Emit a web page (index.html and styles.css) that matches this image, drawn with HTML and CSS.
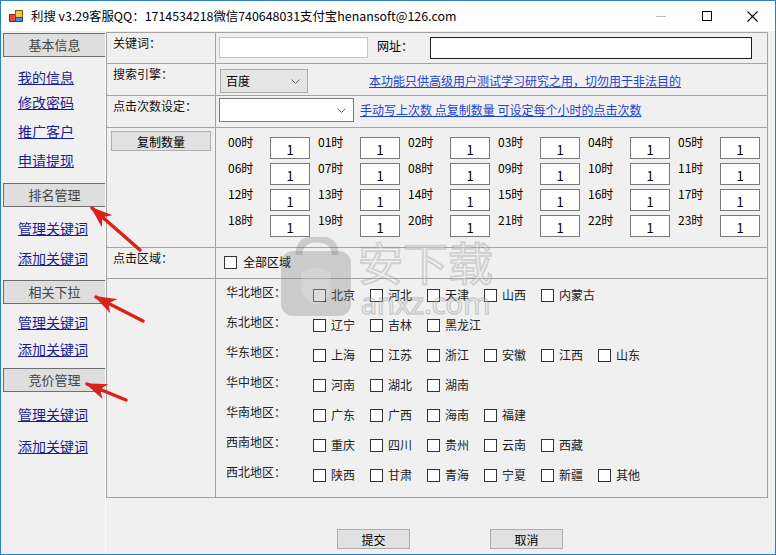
FILE: index.html
```html
<!DOCTYPE html>
<html lang="zh-CN">
<head>
  <meta charset="UTF-8">
  <title>利搜</title>
  <link rel="stylesheet" href="styles.css">
</head>
<body>

<div class="window">
  <div class="titlebar">
    <svg class="app-icon" width="14" height="13" viewBox="0 0 14 13">
      <rect x="0.5" y="4.5" width="6" height="7" fill="#e8453c" stroke="#8a2a20"/>
      <rect x="6.5" y="0.5" width="7" height="7" fill="#f5c542" stroke="#7a5a10"/>
      <rect x="6.5" y="7.5" width="7" height="4" fill="#4a8fd8" stroke="#1f4f8a"/>
    </svg>
    <span class="title">利搜 v3.29客服QQ：1714534218微信740648031支付宝henansoft@126.com</span>
    <div class="win-controls">
      <span class="ctl"><svg width="10" height="10" viewBox="0 0 10 10"><line x1="0" y1="5.5" x2="10" y2="5.5" stroke="#bdbdbd"/></svg></span>
      <span class="ctl"><svg width="10" height="10" viewBox="0 0 10 10"><rect x="0.5" y="0.5" width="9" height="9" fill="none" stroke="#000"/></svg></span>
      <span class="ctl close"><svg width="11" height="11" viewBox="0 0 11 11"><path d="M0.5 0.5 L10.5 10.5 M10.5 0.5 L0.5 10.5" stroke="#000" stroke-width="1.1"/></svg></span>
    </div>
  </div>

  <div class="client">
    <aside class="sidebar">
      <div class="nav-head">基本信息</div>
      <a class="nav-link mt10" href="#">我的信息</a>
      <a class="nav-link mt5" href="#">修改密码</a>
      <a class="nav-link" href="#">推广客户</a>
      <a class="nav-link" href="#">申请提现</a>

      <div class="nav-head mt13">排名管理</div>
      <a class="nav-link mt11" href="#">管理关键词</a>
      <a class="nav-link mt10" href="#">添加关键词</a>

      <div class="nav-head mt12">相关下拉</div>
      <a class="nav-link mt8" href="#">管理关键词</a>
      <a class="nav-link mt7" href="#">添加关键词</a>

      <div class="nav-head">竞价管理</div>
      <a class="nav-link mt12" href="#">管理关键词</a>
      <a class="nav-link mt12" href="#">添加关键词</a>
    </aside>

    <main class="main">
      <div class="form">
        <div class="cell label">关键词：</div>
        <div class="cell field f-keyword">
          <input class="text kw" type="text">
          <span class="url-label">网址：</span>
          <input class="text url" type="text">
        </div>

        <div class="cell label">搜索引擎：</div>
        <div class="cell field f-engine">
          <div class="combo gray">
            <span>百度</span>
            <svg width="9" height="5" viewBox="0 0 9 5"><polyline points="0.5,0.5 4.5,4.5 8.5,0.5" fill="none" stroke="#666"/></svg>
          </div>
          <a class="hint engine-hint" href="#">本功能只供高级用户测试学习研究之用，切勿用于非法目的</a>
        </div>

        <div class="cell label">点击次数设定：</div>
        <div class="cell field f-count">
          <div class="combo white">
            <span></span>
            <svg width="9" height="5" viewBox="0 0 9 5"><polyline points="0.5,0.5 4.5,4.5 8.5,0.5" fill="none" stroke="#666"/></svg>
          </div>
          <a class="hint count-hint" href="#">手动写上次数 点复制数量 可设定每个小时的点击次数</a>
        </div>

        <div class="cell label-btn">
          <button class="btn copy">复制数量</button>
        </div>
        <div class="cell f-hours">
          <div class="hours">
            <div class="hour"><span class="hour-label">00时</span><input class="hour-box" value="1"></div>
            <div class="hour"><span class="hour-label">01时</span><input class="hour-box" value="1"></div>
            <div class="hour"><span class="hour-label">02时</span><input class="hour-box" value="1"></div>
            <div class="hour"><span class="hour-label">03时</span><input class="hour-box" value="1"></div>
            <div class="hour"><span class="hour-label">04时</span><input class="hour-box" value="1"></div>
            <div class="hour"><span class="hour-label">05时</span><input class="hour-box" value="1"></div>
            <div class="hour"><span class="hour-label">06时</span><input class="hour-box" value="1"></div>
            <div class="hour"><span class="hour-label">07时</span><input class="hour-box" value="1"></div>
            <div class="hour"><span class="hour-label">08时</span><input class="hour-box" value="1"></div>
            <div class="hour"><span class="hour-label">09时</span><input class="hour-box" value="1"></div>
            <div class="hour"><span class="hour-label">10时</span><input class="hour-box" value="1"></div>
            <div class="hour"><span class="hour-label">11时</span><input class="hour-box" value="1"></div>
            <div class="hour"><span class="hour-label">12时</span><input class="hour-box" value="1"></div>
            <div class="hour"><span class="hour-label">13时</span><input class="hour-box" value="1"></div>
            <div class="hour"><span class="hour-label">14时</span><input class="hour-box" value="1"></div>
            <div class="hour"><span class="hour-label">15时</span><input class="hour-box" value="1"></div>
            <div class="hour"><span class="hour-label">16时</span><input class="hour-box" value="1"></div>
            <div class="hour"><span class="hour-label">17时</span><input class="hour-box" value="1"></div>
            <div class="hour"><span class="hour-label">18时</span><input class="hour-box" value="1"></div>
            <div class="hour"><span class="hour-label">19时</span><input class="hour-box" value="1"></div>
            <div class="hour"><span class="hour-label">20时</span><input class="hour-box" value="1"></div>
            <div class="hour"><span class="hour-label">21时</span><input class="hour-box" value="1"></div>
            <div class="hour"><span class="hour-label">22时</span><input class="hour-box" value="1"></div>
            <div class="hour"><span class="hour-label">23时</span><input class="hour-box" value="1"></div>
          </div>
        </div>

        <div class="cell label">点击区域：</div>
        <div class="cell field f-all">
          <input class="check" type="checkbox">
          <span class="all-text">全部区域</span>
        </div>

        <div class="cell"></div>
        <div class="cell f-regions">
          <div class="region">
            <span class="region-name">华北地区：</span>
            <label class="opt"><input class="check" type="checkbox">北京</label>
            <label class="opt"><input class="check" type="checkbox">河北</label>
            <label class="opt"><input class="check" type="checkbox">天津</label>
            <label class="opt"><input class="check" type="checkbox">山西</label>
            <label class="opt"><input class="check" type="checkbox">内蒙古</label>
          </div>
          <div class="region">
            <span class="region-name">东北地区：</span>
            <label class="opt"><input class="check" type="checkbox">辽宁</label>
            <label class="opt"><input class="check" type="checkbox">吉林</label>
            <label class="opt"><input class="check" type="checkbox">黑龙江</label>
          </div>
          <div class="region">
            <span class="region-name">华东地区：</span>
            <label class="opt"><input class="check" type="checkbox">上海</label>
            <label class="opt"><input class="check" type="checkbox">江苏</label>
            <label class="opt"><input class="check" type="checkbox">浙江</label>
            <label class="opt"><input class="check" type="checkbox">安徽</label>
            <label class="opt"><input class="check" type="checkbox">江西</label>
            <label class="opt"><input class="check" type="checkbox">山东</label>
          </div>
          <div class="region">
            <span class="region-name">华中地区：</span>
            <label class="opt"><input class="check" type="checkbox">河南</label>
            <label class="opt"><input class="check" type="checkbox">湖北</label>
            <label class="opt"><input class="check" type="checkbox">湖南</label>
          </div>
          <div class="region">
            <span class="region-name">华南地区：</span>
            <label class="opt"><input class="check" type="checkbox">广东</label>
            <label class="opt"><input class="check" type="checkbox">广西</label>
            <label class="opt"><input class="check" type="checkbox">海南</label>
            <label class="opt"><input class="check" type="checkbox">福建</label>
          </div>
          <div class="region">
            <span class="region-name">西南地区：</span>
            <label class="opt"><input class="check" type="checkbox">重庆</label>
            <label class="opt"><input class="check" type="checkbox">四川</label>
            <label class="opt"><input class="check" type="checkbox">贵州</label>
            <label class="opt"><input class="check" type="checkbox">云南</label>
            <label class="opt"><input class="check" type="checkbox">西藏</label>
          </div>
          <div class="region">
            <span class="region-name">西北地区：</span>
            <label class="opt"><input class="check" type="checkbox">陕西</label>
            <label class="opt"><input class="check" type="checkbox">甘肃</label>
            <label class="opt"><input class="check" type="checkbox">青海</label>
            <label class="opt"><input class="check" type="checkbox">宁夏</label>
            <label class="opt"><input class="check" type="checkbox">新疆</label>
            <label class="opt"><input class="check" type="checkbox">其他</label>
          </div>
        </div>
      </div>

      <div class="actions">
        <button class="btn action">提交</button>
        <button class="btn action">取消</button>
      </div>
    </main>
  </div>

  <!-- watermark over the form -->
  <div class="watermark">
    <svg class="wm-lock" width="76" height="82" viewBox="0 0 76 82">
      <path d="M20 18 Q20 2 38 2 Q56 2 56 18" fill="none" stroke="rgba(120,120,120,0.3)" stroke-width="7"/>
      <rect x="2" y="14" width="70" height="65" rx="12" fill="rgba(120,120,120,0.3)"/>
      <path d="M37 30 L52 35 L52 50 Q52 62 37 68 Q22 62 22 50 L22 35 Z" fill="rgba(255,255,255,0.18)"/>
    </svg>
    <div class="wm-text">
      <span class="wm-big">安下载</span>
      <span class="wm-small">anxz.com</span>
    </div>
  </div>

  <!-- red annotation arrows -->
  <svg class="arrows" width="776" height="555" viewBox="0 0 776 555">
    <defs>
      <marker id="head" viewBox="0 0 22 16" refX="20" refY="8" markerWidth="22" markerHeight="16" markerUnits="userSpaceOnUse" orient="auto">
        <path d="M0 0 L22 8 L0 16 L6 8 Z" fill="#d8221a"/>
      </marker>
    </defs>
    <g stroke="#d8221a" stroke-width="3.5" stroke-linecap="round" marker-end="url(#head)">
      <line x1="140" y1="250" x2="92" y2="208"/>
      <line x1="143" y1="321" x2="96" y2="297"/>
      <line x1="126" y1="400" x2="87" y2="384"/>
    </g>
  </svg>
</div>

</body>
</html>
```

FILE: styles.css
```css
* {
  box-sizing: border-box;
}
body {
  margin: 0;
  background: #fff;
  font-family: "Noto Sans CJK SC", "Noto Sans", sans-serif;
  font-size: 12px;
  color: #000;
}
.window {
  position: relative;
  width: 776px;
  height: 555px;
  border: 1px solid #2f7fc6;
  background: #f0f0f0;
  display: flex;
  flex-direction: column;
  overflow: hidden;
}

/* title bar */
.titlebar {
  height: 30px;
  flex-shrink: 0;
  background: #fff;
  display: flex;
  align-items: center;
}
.app-icon {
  margin-left: 8px;
}
.title {
  margin-left: 8px;
  font-size: 12.4px;
  line-height: 16px;
}
.win-controls {
  margin-left: auto;
  height: 100%;
  display: flex;
}
.ctl {
  width: 46px;
  display: flex;
  align-items: center;
  justify-content: center;
}
.ctl.close {
  width: 45px;
}

.client {
  flex: 1;
  display: flex;
}

/* left menu */
.sidebar {
  width: 105px;
  flex-shrink: 0;
  padding: 2px 0 0 2px;
  border-right: 1px solid #fbfbfb;
}
.nav-head {
  height: 24px;
  margin-top: 9px;
  background: #dedede;
  border: 1px solid #6f6f6f;
  border-right: none;
  text-align: center;
  line-height: 22px;
  font-size: 13px;
  color: #444;
}
.nav-head:first-child {
  margin-top: 0;
}
.nav-link {
  display: block;
  width: max-content;
  height: 20px;
  margin: 9px 0 0 15px;
  line-height: 20px;
  font-size: 14px;
  color: #1c1c98;
  text-decoration: underline;
}
.mt5 { margin-top: 5px; }
.mt7 { margin-top: 7px; }
.mt8 { margin-top: 8px; }
.mt10 { margin-top: 10px; }
.mt11 { margin-top: 11px; }
.mt12 { margin-top: 12px; }
.mt13 { margin-top: 13px; }

/* form table */
.main {
  flex: 1;
  padding-top: 1px;
}
.form {
  width: 662px;
  display: grid;
  grid-template-columns: 109px 1fr;
  grid-template-rows: 31px 32px 32px 120px 31px 219px;
  border-top: 1px solid #a3a3a3;
  border-left: 1px solid #a3a3a3;
}
.cell {
  border-right: 1px solid #a3a3a3;
  border-bottom: 1px solid #a3a3a3;
}
.label {
  padding: 2px 0 0 6px;
  line-height: 16px;
  color: #111;
}
.field {
  display: flex;
  align-items: flex-start;
  padding-left: 3px;
}
.text {
  margin: 0;
  padding: 0 3px;
  background: #fff;
  font: inherit;
  outline: none;
}
.f-keyword {
  padding-top: 4px;
}
.kw {
  width: 149px;
  height: 21px;
  border: 1px solid #c4c4c4;
}
.url-label {
  width: 62px;
  padding-left: 9px;
  line-height: 16px;
  margin-top: 1px;
}
.url {
  width: 322px;
  height: 22px;
  border: 1px solid #1e1e1e;
}

.f-engine {
  padding: 5px 0 0 4px;
}
.f-count {
  padding: 2px 0 0 3px;
}
.combo {
  height: 24px;
  display: flex;
  align-items: center;
  justify-content: space-between;
  padding: 0 7px 0 5px;
  line-height: 16px;
}
.combo.gray {
  width: 88px;
  background: #e5e5e5;
  border: 1px solid #acacac;
}
.combo.white {
  width: 135px;
  background: #fff;
  border: 1px solid #7a7a7a;
}
.hint {
  margin-top: 4px;
  line-height: 16px;
  color: #1d44d0;
  text-decoration: underline;
}
.engine-hint {
  margin-left: 61px;
}
.count-hint {
  margin-left: 6px;
}

.btn {
  margin: 0;
  background: #e1e1e1;
  border: 1px solid #adadad;
  font: inherit;
  color: #000;
  padding: 0;
}
.label-btn {
  padding: 3px 0 0 4px;
}
.copy {
  width: 100px;
  height: 20px;
}

/* hour grid */
.f-hours {
  overflow: hidden;
  padding: 9px 0 0 12px;
}
.hours {
  display: grid;
  grid-template-columns: repeat(6, 90px);
  row-gap: 4px;
}
.hour {
  display: flex;
}
.hour-label {
  width: 42px;
  margin-top: -2px;
  line-height: 14px;
}
.hour-box {
  width: 40px;
  height: 22px;
  margin: 0;
  padding: 2px 0 0;
  border: 1px solid #7a7a7a;
  background: #fff;
  text-align: center;
  font: inherit;
  font-size: 13px;
  outline: none;
}

/* regions */
.check {
  appearance: none;
  -webkit-appearance: none;
  width: 13px;
  height: 13px;
  margin: 0;
  border: 1px solid #333;
  background: #fff;
  flex-shrink: 0;
}
.f-all {
  align-items: center;
  padding: 0 0 2px 8px;
}
.all-text {
  margin-left: 6px;
  line-height: 16px;
}
.f-regions {
  padding: 1px 0 0 10px;
}
.region {
  height: 30px;
  display: flex;
  align-items: center;
  color: #222;
}
.region-name {
  width: 87px;
  align-self: flex-start;
  line-height: 24px;
}
.opt {
  width: 57px;
  display: flex;
  align-items: center;
  line-height: 16px;
  white-space: nowrap;
}
.opt .check {
  margin-right: 5px;
}

.actions {
  display: flex;
  gap: 80px;
  margin-top: 31px;
  padding-left: 231px;
}
.action {
  width: 73px;
  height: 20px;
}

/* overlays */
.watermark {
  position: absolute;
  left: 278px;
  top: 236px;
  display: flex;
  align-items: flex-start;
  pointer-events: none;
}
.wm-text {
  display: flex;
  flex-direction: column;
  align-items: center;
  margin-left: 3px;
}
.wm-big {
  font-size: 45px;
  line-height: 50px;
  color: rgba(255, 255, 255, 0.25);
  -webkit-text-stroke: 2px rgba(130, 130, 130, 0.3);
}
.wm-small {
  margin-top: 2px;
  font-family: "Noto Sans", sans-serif;
  font-size: 29px;
  line-height: 28px;
  color: rgba(255, 255, 255, 0.25);
  -webkit-text-stroke: 1.5px rgba(130, 130, 130, 0.35);
}
.arrows {
  position: absolute;
  left: -1px;
  top: -1px;
  pointer-events: none;
}
```
